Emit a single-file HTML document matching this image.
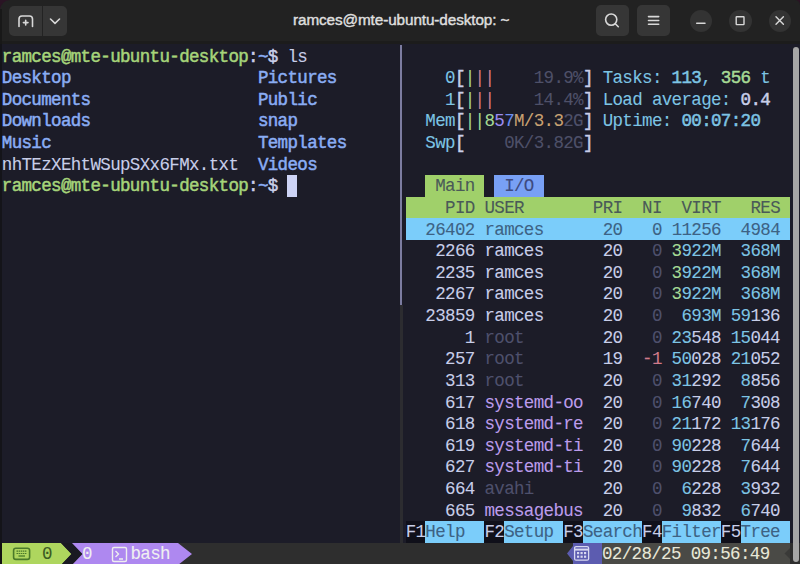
<!DOCTYPE html><html><head><meta charset="utf-8"><style>
html,body{margin:0;padding:0;width:800px;height:564px;overflow:hidden;background:#1c1c28}
.a{position:absolute}
.t{position:absolute;white-space:pre;-webkit-text-stroke:0.08px currentColor;font-family:"Liberation Mono",monospace;font-size:17.5px;letter-spacing:-0.650px;line-height:21.62px;height:21.62px}
.b{font-weight:normal;-webkit-text-stroke:0.5px currentColor}
</style></head><body>

<div class="a" style="left:0;top:44px;width:800px;height:520px;background:#1c1c28"></div>
<div class="a" style="left:0;top:44px;width:1.5px;height:520px;background:#141419"></div>
<div class="a" style="left:399.6px;top:45px;width:2.6px;height:259.74px;background:#7c7ca0"></div>
<div class="a" style="left:399.8px;top:304.74px;width:3.4px;height:237.82px;background:#2c2c30"></div>
<div class="a" style="left:425.35px;top:175.02px;width:59.10px;height:21.62px;background:#a0d06a"></div>
<div class="a" style="left:494.30px;top:175.02px;width:49.25px;height:21.62px;background:#78a0f5"></div>
<div class="a" style="left:405.65px;top:196.64px;width:384.15px;height:21.62px;background:#a0d06a"></div>
<div class="a" style="left:405.65px;top:218.26px;width:384.15px;height:21.62px;background:#7bcdfa"></div>
<div class="a" style="left:405.65px;top:520.94px;width:19.70px;height:21.62px;background:#10101a"></div>
<div class="a" style="left:425.35px;top:520.94px;width:59.10px;height:21.62px;background:#7bcdfa"></div>
<div class="a" style="left:484.45px;top:520.94px;width:19.70px;height:21.62px;background:#10101a"></div>
<div class="a" style="left:504.15px;top:520.94px;width:59.10px;height:21.62px;background:#7bcdfa"></div>
<div class="a" style="left:563.25px;top:520.94px;width:19.70px;height:21.62px;background:#10101a"></div>
<div class="a" style="left:582.95px;top:520.94px;width:59.10px;height:21.62px;background:#7bcdfa"></div>
<div class="a" style="left:642.05px;top:520.94px;width:19.70px;height:21.62px;background:#10101a"></div>
<div class="a" style="left:661.75px;top:520.94px;width:59.10px;height:21.62px;background:#7bcdfa"></div>
<div class="a" style="left:720.85px;top:520.94px;width:19.70px;height:21.62px;background:#10101a"></div>
<div class="a" style="left:740.55px;top:520.94px;width:49.25px;height:21.62px;background:#7bcdfa"></div>
<div class="a" style="left:287.45px;top:175.02px;width:9.85px;height:21.62px;background:#cdd3f5"></div>
<div class="t b" style="left:1.80px;top:46.60px;color:#a6d47a">ramces@mte-ubuntu-desktop</div>
<div class="t b" style="left:248.05px;top:46.60px;color:#c8cee9">:</div>
<div class="t b" style="left:257.90px;top:46.60px;color:#8aadf4">~</div>
<div class="t b" style="left:267.75px;top:46.60px;color:#c8cee9">$</div>
<div class="t" style="left:277.60px;top:46.60px;color:#c8cee9"> ls</div>
<div class="t b" style="left:1.80px;top:68.22px;color:#8aadf4">Desktop</div>
<div class="t b" style="left:257.90px;top:68.22px;color:#8aadf4">Pictures</div>
<div class="t b" style="left:1.80px;top:89.84px;color:#8aadf4">Documents</div>
<div class="t b" style="left:257.90px;top:89.84px;color:#8aadf4">Public</div>
<div class="t b" style="left:1.80px;top:111.46px;color:#8aadf4">Downloads</div>
<div class="t b" style="left:257.90px;top:111.46px;color:#8aadf4">snap</div>
<div class="t b" style="left:1.80px;top:133.08px;color:#8aadf4">Music</div>
<div class="t b" style="left:257.90px;top:133.08px;color:#8aadf4">Templates</div>
<div class="t" style="left:1.80px;top:154.70px;color:#c8cee9">nhTEzXEhtWSupSXx6FMx.txt</div>
<div class="t b" style="left:257.90px;top:154.70px;color:#8aadf4">Videos</div>
<div class="t b" style="left:1.80px;top:176.32px;color:#a6d47a">ramces@mte-ubuntu-desktop</div>
<div class="t b" style="left:248.05px;top:176.32px;color:#c8cee9">:</div>
<div class="t b" style="left:257.90px;top:176.32px;color:#8aadf4">~</div>
<div class="t b" style="left:267.75px;top:176.32px;color:#c8cee9">$</div>
<div class="t" style="left:445.05px;top:68.22px;color:#7dc4e4">0</div>
<div class="t b" style="left:454.90px;top:68.22px;color:#c8cee9">[</div>
<div class="t" style="left:464.75px;top:68.22px;color:#a6da95">|</div>
<div class="t" style="left:474.60px;top:68.22px;color:#d07a8a">||</div>
<div class="t" style="left:533.70px;top:68.22px;color:#4e5068">19.9%</div>
<div class="t b" style="left:582.95px;top:68.22px;color:#c8cee9">]</div>
<div class="t" style="left:445.05px;top:89.84px;color:#7dc4e4">1</div>
<div class="t b" style="left:454.90px;top:89.84px;color:#c8cee9">[</div>
<div class="t" style="left:464.75px;top:89.84px;color:#a6da95">|</div>
<div class="t" style="left:474.60px;top:89.84px;color:#d07a8a">||</div>
<div class="t" style="left:533.70px;top:89.84px;color:#4e5068">14.4%</div>
<div class="t b" style="left:582.95px;top:89.84px;color:#c8cee9">]</div>
<div class="t" style="left:425.35px;top:111.46px;color:#7dc4e4">Mem</div>
<div class="t b" style="left:454.90px;top:111.46px;color:#c8cee9">[</div>
<div class="t" style="left:464.75px;top:111.46px;color:#a6da95">||8</div>
<div class="t" style="left:494.30px;top:111.46px;color:#9c8cf0">5</div>
<div class="t" style="left:504.15px;top:111.46px;color:#6e90f0">7</div>
<div class="t" style="left:514.00px;top:111.46px;color:#c9a272">M/3.3</div>
<div class="t" style="left:563.25px;top:111.46px;color:#4e5068">2G</div>
<div class="t b" style="left:582.95px;top:111.46px;color:#c8cee9">]</div>
<div class="t" style="left:425.35px;top:133.08px;color:#7dc4e4">Swp</div>
<div class="t b" style="left:454.90px;top:133.08px;color:#c8cee9">[</div>
<div class="t" style="left:504.15px;top:133.08px;color:#4e5068">0K/3.82G</div>
<div class="t b" style="left:582.95px;top:133.08px;color:#c8cee9">]</div>
<div class="t" style="left:602.65px;top:68.22px;color:#7dc4e4">Tasks: </div>
<div class="t b" style="left:671.60px;top:68.22px;color:#7dc4e4">113</div>
<div class="t" style="left:701.15px;top:68.22px;color:#7dc4e4">, </div>
<div class="t b" style="left:720.85px;top:68.22px;color:#a6da95">356</div>
<div class="t" style="left:750.40px;top:68.22px;color:#7dc4e4"> t</div>
<div class="t" style="left:602.65px;top:89.84px;color:#7dc4e4">Load average: </div>
<div class="t b" style="left:740.55px;top:89.84px;color:#c8cee9">0.4</div>
<div class="t" style="left:602.65px;top:111.46px;color:#7dc4e4">Uptime: </div>
<div class="t b" style="left:681.45px;top:111.46px;color:#7dc4e4">00:07:20</div>
<div class="t" style="left:435.20px;top:176.32px;color:#4a5a58">Main</div>
<div class="t" style="left:504.15px;top:176.32px;color:#3e4a80">I/O</div>
<div class="t" style="left:405.65px;top:197.94px;color:#4a5a58">    PID USER       PRI  NI  VIRT   RES</div>
<div class="t" style="left:405.65px;top:219.56px;color:#3d6284">  26402 ramces      20   0 11256  4984</div>
<div class="t" style="left:405.65px;top:241.18px;color:#c8cee9">   2266</div>
<div class="t" style="left:484.45px;top:241.18px;color:#c8cee9">ramces</div>
<div class="t" style="left:592.80px;top:241.18px;color:#c8cee9"> 20</div>
<div class="t" style="left:632.20px;top:241.18px;color:#4e506c">  0</div>
<div class="t" style="left:671.60px;top:241.18px;color:#a6da95">3</div>
<div class="t" style="left:681.45px;top:241.18px;color:#7dc4e4">922M</div>
<div class="t" style="left:730.70px;top:241.18px;color:#7dc4e4"> 368M</div>
<div class="t" style="left:405.65px;top:262.80px;color:#c8cee9">   2235</div>
<div class="t" style="left:484.45px;top:262.80px;color:#c8cee9">ramces</div>
<div class="t" style="left:592.80px;top:262.80px;color:#c8cee9"> 20</div>
<div class="t" style="left:632.20px;top:262.80px;color:#4e506c">  0</div>
<div class="t" style="left:671.60px;top:262.80px;color:#a6da95">3</div>
<div class="t" style="left:681.45px;top:262.80px;color:#7dc4e4">922M</div>
<div class="t" style="left:730.70px;top:262.80px;color:#7dc4e4"> 368M</div>
<div class="t" style="left:405.65px;top:284.42px;color:#c8cee9">   2267</div>
<div class="t" style="left:484.45px;top:284.42px;color:#c8cee9">ramces</div>
<div class="t" style="left:592.80px;top:284.42px;color:#c8cee9"> 20</div>
<div class="t" style="left:632.20px;top:284.42px;color:#4e506c">  0</div>
<div class="t" style="left:671.60px;top:284.42px;color:#a6da95">3</div>
<div class="t" style="left:681.45px;top:284.42px;color:#7dc4e4">922M</div>
<div class="t" style="left:730.70px;top:284.42px;color:#7dc4e4"> 368M</div>
<div class="t" style="left:405.65px;top:306.04px;color:#c8cee9">  23859</div>
<div class="t" style="left:484.45px;top:306.04px;color:#c8cee9">ramces</div>
<div class="t" style="left:592.80px;top:306.04px;color:#c8cee9"> 20</div>
<div class="t" style="left:632.20px;top:306.04px;color:#4e506c">  0</div>
<div class="t" style="left:671.60px;top:306.04px;color:#7dc4e4"> 693M</div>
<div class="t" style="left:730.70px;top:306.04px;color:#7dc4e4">59</div>
<div class="t" style="left:750.40px;top:306.04px;color:#c8cee9">136</div>
<div class="t" style="left:405.65px;top:327.66px;color:#c8cee9">      1</div>
<div class="t" style="left:484.45px;top:327.66px;color:#4e506c">root</div>
<div class="t" style="left:592.80px;top:327.66px;color:#c8cee9"> 20</div>
<div class="t" style="left:632.20px;top:327.66px;color:#4e506c">  0</div>
<div class="t" style="left:671.60px;top:327.66px;color:#7dc4e4">23</div>
<div class="t" style="left:691.30px;top:327.66px;color:#c8cee9">548</div>
<div class="t" style="left:730.70px;top:327.66px;color:#7dc4e4">15</div>
<div class="t" style="left:750.40px;top:327.66px;color:#c8cee9">044</div>
<div class="t" style="left:405.65px;top:349.28px;color:#c8cee9">    257</div>
<div class="t" style="left:484.45px;top:349.28px;color:#4e506c">root</div>
<div class="t" style="left:592.80px;top:349.28px;color:#c8cee9"> 19</div>
<div class="t" style="left:632.20px;top:349.28px;color:#d07a8a"> -1</div>
<div class="t" style="left:671.60px;top:349.28px;color:#7dc4e4">50</div>
<div class="t" style="left:691.30px;top:349.28px;color:#c8cee9">028</div>
<div class="t" style="left:730.70px;top:349.28px;color:#7dc4e4">21</div>
<div class="t" style="left:750.40px;top:349.28px;color:#c8cee9">052</div>
<div class="t" style="left:405.65px;top:370.90px;color:#c8cee9">    313</div>
<div class="t" style="left:484.45px;top:370.90px;color:#4e506c">root</div>
<div class="t" style="left:592.80px;top:370.90px;color:#c8cee9"> 20</div>
<div class="t" style="left:632.20px;top:370.90px;color:#4e506c">  0</div>
<div class="t" style="left:671.60px;top:370.90px;color:#7dc4e4">31</div>
<div class="t" style="left:691.30px;top:370.90px;color:#c8cee9">292</div>
<div class="t" style="left:730.70px;top:370.90px;color:#7dc4e4"> 8</div>
<div class="t" style="left:750.40px;top:370.90px;color:#c8cee9">856</div>
<div class="t" style="left:405.65px;top:392.52px;color:#c8cee9">    617</div>
<div class="t" style="left:484.45px;top:392.52px;color:#bc9cec">systemd-oo</div>
<div class="t" style="left:592.80px;top:392.52px;color:#c8cee9"> 20</div>
<div class="t" style="left:632.20px;top:392.52px;color:#4e506c">  0</div>
<div class="t" style="left:671.60px;top:392.52px;color:#7dc4e4">16</div>
<div class="t" style="left:691.30px;top:392.52px;color:#c8cee9">740</div>
<div class="t" style="left:730.70px;top:392.52px;color:#7dc4e4"> 7</div>
<div class="t" style="left:750.40px;top:392.52px;color:#c8cee9">308</div>
<div class="t" style="left:405.65px;top:414.14px;color:#c8cee9">    618</div>
<div class="t" style="left:484.45px;top:414.14px;color:#bc9cec">systemd-re</div>
<div class="t" style="left:592.80px;top:414.14px;color:#c8cee9"> 20</div>
<div class="t" style="left:632.20px;top:414.14px;color:#4e506c">  0</div>
<div class="t" style="left:671.60px;top:414.14px;color:#7dc4e4">21</div>
<div class="t" style="left:691.30px;top:414.14px;color:#c8cee9">172</div>
<div class="t" style="left:730.70px;top:414.14px;color:#7dc4e4">13</div>
<div class="t" style="left:750.40px;top:414.14px;color:#c8cee9">176</div>
<div class="t" style="left:405.65px;top:435.76px;color:#c8cee9">    619</div>
<div class="t" style="left:484.45px;top:435.76px;color:#bc9cec">systemd-ti</div>
<div class="t" style="left:592.80px;top:435.76px;color:#c8cee9"> 20</div>
<div class="t" style="left:632.20px;top:435.76px;color:#4e506c">  0</div>
<div class="t" style="left:671.60px;top:435.76px;color:#7dc4e4">90</div>
<div class="t" style="left:691.30px;top:435.76px;color:#c8cee9">228</div>
<div class="t" style="left:730.70px;top:435.76px;color:#7dc4e4"> 7</div>
<div class="t" style="left:750.40px;top:435.76px;color:#c8cee9">644</div>
<div class="t" style="left:405.65px;top:457.38px;color:#c8cee9">    627</div>
<div class="t" style="left:484.45px;top:457.38px;color:#bc9cec">systemd-ti</div>
<div class="t" style="left:592.80px;top:457.38px;color:#c8cee9"> 20</div>
<div class="t" style="left:632.20px;top:457.38px;color:#4e506c">  0</div>
<div class="t" style="left:671.60px;top:457.38px;color:#7dc4e4">90</div>
<div class="t" style="left:691.30px;top:457.38px;color:#c8cee9">228</div>
<div class="t" style="left:730.70px;top:457.38px;color:#7dc4e4"> 7</div>
<div class="t" style="left:750.40px;top:457.38px;color:#c8cee9">644</div>
<div class="t" style="left:405.65px;top:479.00px;color:#c8cee9">    664</div>
<div class="t" style="left:484.45px;top:479.00px;color:#4e506c">avahi</div>
<div class="t" style="left:592.80px;top:479.00px;color:#c8cee9"> 20</div>
<div class="t" style="left:632.20px;top:479.00px;color:#4e506c">  0</div>
<div class="t" style="left:671.60px;top:479.00px;color:#7dc4e4"> 6</div>
<div class="t" style="left:691.30px;top:479.00px;color:#c8cee9">228</div>
<div class="t" style="left:730.70px;top:479.00px;color:#7dc4e4"> 3</div>
<div class="t" style="left:750.40px;top:479.00px;color:#c8cee9">932</div>
<div class="t" style="left:405.65px;top:500.62px;color:#c8cee9">    665</div>
<div class="t" style="left:484.45px;top:500.62px;color:#bc9cec">messagebus</div>
<div class="t" style="left:592.80px;top:500.62px;color:#c8cee9"> 20</div>
<div class="t" style="left:632.20px;top:500.62px;color:#4e506c">  0</div>
<div class="t" style="left:671.60px;top:500.62px;color:#7dc4e4"> 9</div>
<div class="t" style="left:691.30px;top:500.62px;color:#c8cee9">832</div>
<div class="t" style="left:730.70px;top:500.62px;color:#7dc4e4"> 6</div>
<div class="t" style="left:750.40px;top:500.62px;color:#c8cee9">740</div>
<div class="t" style="left:405.65px;top:522.24px;color:#c8cee9">F1</div>
<div class="t" style="left:425.35px;top:522.24px;color:#3d6284">Help</div>
<div class="t" style="left:484.45px;top:522.24px;color:#c8cee9">F2</div>
<div class="t" style="left:504.15px;top:522.24px;color:#3d6284">Setup</div>
<div class="t" style="left:563.25px;top:522.24px;color:#c8cee9">F3</div>
<div class="t" style="left:582.95px;top:522.24px;color:#3d6284">Search</div>
<div class="t" style="left:642.05px;top:522.24px;color:#c8cee9">F4</div>
<div class="t" style="left:661.75px;top:522.24px;color:#3d6284">Filter</div>
<div class="t" style="left:720.85px;top:522.24px;color:#c8cee9">F5</div>
<div class="t" style="left:740.55px;top:522.24px;color:#3d6284">Tree</div>
<div class="a" style="left:0;top:0;width:14px;height:14px;background:#2a1424"></div>
<div class="a" style="left:792px;top:0;width:8px;height:8px;background:#2a1424"></div>
<div class="a" style="left:0;top:0;width:800px;height:44px;background:#222222;border-radius:10px 5px 0 0"></div>
<div class="a" style="left:0;top:40.5px;width:800px;height:3.5px;background:#1c1c1c"></div>
<div class="a" style="left:0;top:9px;width:1.5px;height:35px;background:#181818"></div>
<div class="a" style="left:9px;top:5.5px;width:57.5px;height:30.5px;background:#363636;border-radius:5px"></div>
<div class="a" style="left:42px;top:5.5px;width:1px;height:30.5px;background:#232323"></div>
<div class="a" style="left:596px;top:5px;width:33px;height:31px;background:#363636;border-radius:5px"></div>
<div class="a" style="left:637px;top:5px;width:33px;height:31px;background:#363636;border-radius:5px"></div>
<div class="a" style="left:689.5px;top:9.5px;width:22.5px;height:22.5px;background:#333333;border-radius:50%"></div>
<div class="a" style="left:729.0px;top:9.5px;width:22.5px;height:22.5px;background:#333333;border-radius:50%"></div>
<div class="a" style="left:768.6px;top:9.5px;width:22.5px;height:22.5px;background:#333333;border-radius:50%"></div>
<svg class="a" style="left:0;top:0" width="800" height="44" viewBox="0 0 800 44">
<g fill="none" stroke="#d8d8d8" stroke-width="1.6" stroke-linecap="round" stroke-linejoin="round">
<path d="M19 26.5 V19 Q19 16 22 16 H29.5 Q32.5 16 32.5 19 V26.5"/>
<path d="M25.7 20.3 V24.9 M23.4 22.6 H28"/>
<path d="M50.5 19 L55 23.3 L59.5 19"/>
<circle cx="611.2" cy="19.6" r="5.6"/>
<path d="M615.3 23.7 L618.3 26.7"/>
<path d="M648.5 16.6 H658.7 M648.5 20.5 H658.7 M648.5 24.3 H658.7"/>
<path d="M696.7 23.3 H705" stroke-width="1.5"/>
<rect x="736.2" y="16.8" width="7.8" height="7.8" stroke-width="1.4" rx="0.5"/>
<path d="M776 16.8 L783.4 24.2 M783.4 16.8 L776 24.2" stroke-width="1.4"/>
</g></svg>
<div class="a" style="left:293px;top:9px;width:220px;height:22px;font-family:'Liberation Sans',sans-serif;font-weight:normal;-webkit-text-stroke:0.45px #dedede;font-size:15.3px;letter-spacing:-0.1px;color:#dedede;white-space:pre;line-height:22px">ramces@mte-ubuntu-desktop: ~</div>
<div class="a" style="left:0;top:542.56px;width:800px;height:21.44px;background:#2e2e2e"></div>
<div class="a" style="left:0;top:542.56px;width:2px;height:21.44px;background:#121212"></div>
<svg class="a" style="left:0;top:542.56px" width="800" height="22" viewBox="0 0 800 22">
<polygon points="2,0 61,0 71.5,11 61,22 2,22" fill="#aed65e"/>
<polygon points="61,0 72,0 82.5,11 72,22 61,22 71.5,11" fill="#1a1a22"/>
<polygon points="72,0 178,0 192,11 178,22 72,22 82.5,11" fill="#ae88f0"/>
<rect x="602" y="0" width="188" height="22" fill="#4a4a46"/><polygon points="784.5,10.5 790,5 790,16" fill="#3a3a38"/><polygon points="567,10.5 573,3 573,0 602,0 602,22 573,22 573,18" fill="#5c5cb0"/>
<g fill="none" stroke="#4a7a2a" stroke-width="1.6"><rect x="13.6" y="5.2" width="16" height="11.2" rx="2.2"/><path d="M16.5 8.2 H27" stroke-width="1.2" stroke-dasharray="1.5 0.6"/><path d="M16.5 10.5 H27" stroke-width="1.2" stroke-dasharray="1.5 0.6"/><path d="M18.5 13 H25" stroke-width="1.3"/></g>
<g fill="none" stroke="#eee" stroke-width="1.4"><rect x="112.5" y="4.5" width="14" height="14" rx="1.5"/><path d="M115.5 8 L118.5 11 L115.5 14 M119 16 H123"/></g>
<g fill="none" stroke="#d8d8f0" stroke-width="1.3"><rect x="574.6" y="3.6" width="14" height="13.6" rx="1.5"/><path d="M574.6 6.6 H588.6" stroke-width="2"/></g><g fill="#d8d8f0"><rect x="577" y="9" width="2.2" height="2.2"/><rect x="580.5" y="9" width="2.2" height="2.2"/><rect x="584" y="9" width="2.2" height="2.2"/><rect x="577" y="12.6" width="2.2" height="2.2"/><rect x="580.5" y="12.6" width="2.2" height="2.2"/><rect x="584" y="12.6" width="2.2" height="2.2"/></g>
</svg>
<div class="t" style="left:42px;top:544.36px;color:#3a5a24">0</div>
<div class="t" style="left:82px;top:544.36px;color:#f0f0f0">0</div>
<div class="t" style="left:130.5px;top:544.36px;color:#f0f0f0">bash</div>
<div class="t" style="left:602px;top:544.36px;color:#e8e8d8">02/28/25 09:56:49</div>
<div class="a" style="left:793px;top:47px;width:6.2px;height:515px;background:#a6a6a6;border-radius:3.1px"></div>
</body></html>
